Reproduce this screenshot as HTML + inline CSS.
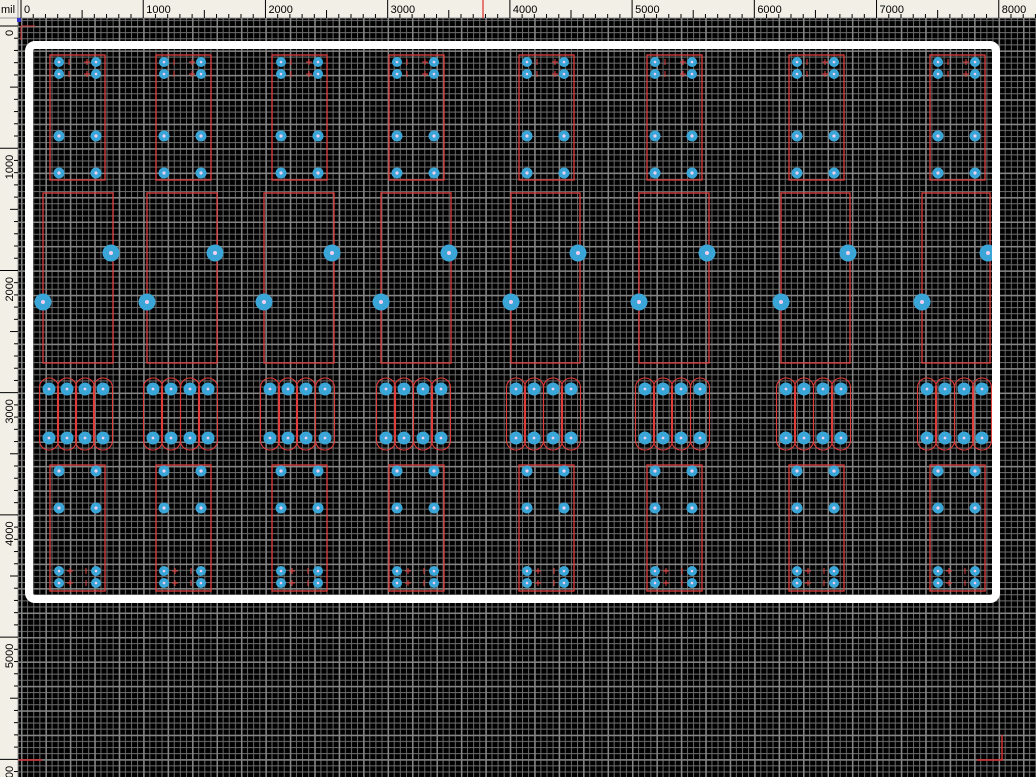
<!DOCTYPE html>
<html><head><meta charset="utf-8"><style>
html,body{margin:0;padding:0;background:#000;overflow:hidden}
svg{display:block;font-family:"Liberation Sans",sans-serif}
</style></head><body>
<svg id="s" width="1036" height="777" xmlns="http://www.w3.org/2000/svg">
<defs>
<pattern id="fine" x="21" y="26" width="6.11" height="6.11" patternUnits="userSpaceOnUse">
<rect width="6.11" height="6.11" fill="#000"/>
<path d="M0 0.5H6.11M0.5 0V6.11" stroke="#6a6a6a" stroke-width="1"/>
</pattern>
<pattern id="major" x="21" y="26" width="24.44" height="24.44" patternUnits="userSpaceOnUse">
<path d="M0 0.5H24.44M0.5 0V24.44" stroke="#858585" stroke-width="2"/>
</pattern>
</defs>
<rect x="18" y="18" width="1018" height="759" fill="url(#fine)"/>
<rect x="18" y="18" width="1018" height="759" fill="url(#major)"/>
<g id="g"></g>
<rect x="29" y="45" width="967" height="554" rx="6" fill="none" stroke="#fff" stroke-width="8"/>
<path d="M977 760H1002V735" stroke="#d03030" fill="none" stroke-width="1.5"/>
<path d="M18 760H42" stroke="#d03030" fill="none" stroke-width="1.5"/>
<path d="M21 26V40M21 26H35" stroke="#d03030" fill="none" stroke-width="1"/>
<rect x="0" y="0" width="1036" height="18" fill="#f1efe6"/>
<rect x="0" y="0" width="18" height="777" fill="#f1efe6"/>
<line x1="0" y1="18" x2="1036" y2="18" stroke="#999"/>
<line x1="18" y1="0" x2="18" y2="777" stroke="#999"/>
<g id="r" stroke="#000" stroke-width="1"></g>
<text x="1" y="13" font-size="11">mil</text>
<line x1="483" y1="0" x2="483" y2="18" stroke="#e00000"/>
<rect x="17" y="18" width="4" height="4" fill="#3030d0"/>
</svg>
<script>
var NS="http://www.w3.org/2000/svg",g=document.getElementById('g'),r=document.getElementById('r');
function el(p,t,a,txt){var e=document.createElementNS(NS,t);for(var k in a)e.setAttribute(k,a[k]);if(txt)e.textContent=txt;p.appendChild(e);return e;}
var RED="#e03c3c";
function pad(x,y,R,h){el(g,'circle',{cx:x,cy:y,r:R,fill:"#3aa6d8"});el(g,'circle',{cx:x,cy:y,r:h,fill:"#f0d0f0"});}
var L=[59,164,281,397,527,655,797,938],W=37;
var rx=[50,156,272,389,519,647,789,930];
for(var i=0;i<8;i++){
 var a=L[i],b=a+W,x0=rx[i];
 el(g,'rect',{x:x0,y:55,width:55,height:125,fill:"none",stroke:RED,"stroke-width":1.3});
 [62,74].forEach(function(y){pad(a,y,5,1.3);pad(b,y,5,1.3);el(g,'path',{d:"M"+(a+10)+" "+(y-3)+"v6M"+(b-12)+" "+y+"h6M"+(b-9)+" "+(y-3)+"v6",stroke:RED,"stroke-width":1});});
 [136,173].forEach(function(y){pad(a,y,5.5,1.6);pad(b,y,5.5,1.6);});
 el(g,'rect',{x:x0,y:465,width:55,height:126,fill:"none",stroke:RED,"stroke-width":1.3});
 [471,508].forEach(function(y){pad(a,y,5.5,1.6);pad(b,y,5.5,1.6);});
 [571,583].forEach(function(y){pad(a,y,5,1.3);pad(b,y,5,1.3);el(g,'path',{d:"M"+(a+8)+" "+y+"h6M"+(a+11)+" "+(y-3)+"v6M"+(b-10)+" "+(y-3)+"v6",stroke:RED,"stroke-width":1});});
}
var B=[[43,111],[147,215],[264,332],[381,449],[511,578],[639,707],[781,848],[922,988]];
B.forEach(function(p){
 el(g,'rect',{x:p[0],y:193,width:p[1]-p[0]+2,height:170,fill:"none",stroke:RED,"stroke-width":1.3});
 pad(p[1],253,8.5,2);pad(p[0],302,8.5,2);
});
var O=[[49,67,85,103],[153,171,190,208],[270,288,306,325],[386,404,423,441],[516,534,553,571],[645,663,681,700],[786,804,823,841],[927,945,964,982]];
O.forEach(function(c){c.forEach(function(x){
 el(g,'rect',{x:x-9.5,y:378,width:19,height:72,rx:9.5,fill:"none",stroke:RED,"stroke-width":1.1});
 pad(x,389,6.5,1.4);pad(x,438,6.5,1.4);});});
var sc=0.12222;
for(var m=0;m<=8400;m+=100){var x=21+m*sc;var h=m%1000==0?18:(m%500==0?8:4);el(r,'line',{x1:x,y1:18-h,x2:x,y2:18});
 if(m%1000==0)el(r,'text',{x:x+3,y:13,"font-size":11,stroke:"none"},""+m);}
for(var m=0;m<=6200;m+=100){var y=26+m*sc;var h=m%1000==0?18:(m%500==0?8:4);el(r,'line',{x1:18-h,y1:y,x2:18,y2:y});
 if(m%1000==0)el(r,'text',{x:0,y:0,"font-size":11,stroke:"none",transform:"translate(13,"+(y+3)+") rotate(-90) translate(-"+(m==0?7:28)+",0)"},""+m);}
</script>
</body></html>
